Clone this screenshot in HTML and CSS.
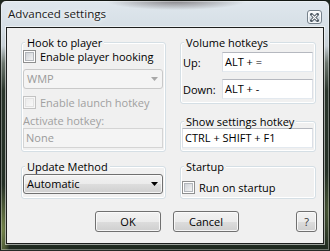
FILE: index.html
```html
<!DOCTYPE html>
<html>
<head>
<meta charset="utf-8">
<link rel="stylesheet" href="styles.css">
</head>
<body>
<div class="window">
  <div class="titlebar">
    <span class="title">Advanced settings</span>
    <span class="close"><svg width="9" height="9" viewBox="0 0 9 9"><path d="M1.5 1.5 L7.5 7.5 M7.5 1.5 L1.5 7.5" stroke="#4e5963" stroke-width="3" stroke-linecap="square"/><path d="M1.8 1.8 L7.2 7.2 M7.2 1.8 L1.8 7.2" stroke="#fff" stroke-width="1.1"/></svg></span>
  </div>
  <div class="client">
    <fieldset class="group hook">
      <legend>Hook to player</legend>
      <label class="check first"><span class="box"></span>Enable player hooking</label>
      <div class="combo disabled"><span>WMP</span><svg width="7" height="4" viewBox="0 0 7 4"><polygon points="0,0 7,0 3.5,4" fill="#a8a8a8"/></svg></div>
      <label class="check second disabled"><span class="box"></span>Enable launch hotkey</label>
      <div class="label disabled">Activate hotkey:</div>
      <div class="textbox disabled">None</div>
    </fieldset>
    <div class="rightcol">
      <fieldset class="group volume">
        <legend>Volume hotkeys</legend>
        <div class="field up"><span>Up:</span><div class="textbox">ALT + =</div></div>
        <div class="field down"><span>Down:</span><div class="textbox">ALT + -</div></div>
      </fieldset>
      <fieldset class="group show">
        <legend>Show settings hotkey</legend>
        <div class="textbox">CTRL + SHIFT + F1</div>
      </fieldset>
    </div>
    <fieldset class="group update">
      <legend>Update Method</legend>
      <div class="combo"><span>Automatic</span><svg width="7" height="4" viewBox="0 0 7 4"><polygon points="0,0 7,0 3.5,4" fill="#000"/></svg></div>
    </fieldset>
    <fieldset class="group startup">
      <legend>Startup</legend>
      <label class="check"><span class="box"></span>Run on startup</label>
    </fieldset>
    <div class="buttons">
      <button class="btn ok">OK</button>
      <button class="btn cancel">Cancel</button>
      <button class="btn help">?</button>
    </div>
  </div>
</div>
</body>
</html>
```

FILE: styles.css
```css
html, body {
  margin: 0;
  padding: 0;
  background: #1c261d;
}
body {
  font-family: "Open Sans", "Noto Sans", sans-serif;
  font-size: 11px;
  color: #000;
}
.window {
  width: 330px;
  height: 251px;
  box-sizing: border-box;
  border: 1px solid rgba(18, 22, 18, 0.9);
  border-radius: 6px 6px 0 0;
  padding: 0 5px 6px 5px;
  display: flex;
  flex-direction: column;
  background:
    radial-gradient(70px 9px at 175px 0px, rgba(60, 50, 52, 0.55), rgba(60, 50, 52, 0)),
    radial-gradient(7px 45px at 2px 228px, rgba(190, 210, 110, 0.55), rgba(190, 210, 110, 0)),
    radial-gradient(7px 40px at 327px 210px, rgba(150, 170, 90, 0.35), rgba(150, 170, 90, 0)),
    linear-gradient(to bottom, #dfe7ed 0px, #d6dfe6 26px, #c7d0d6 45px, #6d776f 62px, #2a352b 90px, #1f2a20 100%);
  box-shadow: inset 0 0 0 1px rgba(255, 255, 255, 0.35);
}
.titlebar {
  height: 26px;
  flex: none;
  display: flex;
  justify-content: space-between;
  align-items: flex-start;
}
.title {
  margin: 5px 0 0 2px;
  font-size: 11.6px;
  line-height: 16px;
  color: #1a1a1a;
  text-shadow: 0 0 6px rgba(255, 255, 255, 0.95), 0 0 3px rgba(255, 255, 255, 0.9);
}
.close {
  margin: 9px 2px 0 0;
  width: 15px;
  height: 14px;
  box-sizing: border-box;
  border: 1px solid #76828c;
  border-radius: 3px;
  background: linear-gradient(#fbfcfd, #e6ecf1 50%, #d5dde4 51%, #e4eaef);
  box-shadow: inset 0 0 0 1px rgba(255, 255, 255, 0.7);
  display: flex;
  align-items: center;
  justify-content: center;
}
.client {
  flex: 1;
  background: #f0f0f0;
  border: 1px solid #1d1f1e;
  box-shadow: 0 0 0 1px rgba(255, 255, 255, 0.55);
  display: grid;
  grid-template-columns: 145px 136px;
  column-gap: 14px;
  row-gap: 8px;
  align-content: start;
  padding: 8px 7px 0 14px;
}
.group {
  margin: 0;
  min-width: 0;
  padding: 0 2px 3px 1px;
  border: 1px solid #d5dfe5;
  border-radius: 3px;
  box-shadow: inset 0 0 0 1px #fff;
}
.group legend {
  margin-left: 2px;
  padding: 0 2px;
  line-height: 13px;
  background: #f0f0f0;
}
.rightcol {
  display: flex;
  flex-direction: column;
  gap: 11px;
}
.volume { padding-bottom: 4px; }
.update, .startup { padding-bottom: 4px; }
.check {
  display: flex;
  align-items: center;
  gap: 4px;
  height: 13px;
  line-height: 13px;
  white-space: nowrap;
}
.check.first { margin-top: 1px; }
.check.second { margin-top: 7px; }
.startup .check { margin-top: 8px; }
.box {
  flex: none;
  box-sizing: border-box;
  width: 13px;
  height: 13px;
  padding: 1px;
  border: 1px solid #8e8f8f;
  background: #fff;
}
.box::before {
  content: "";
  display: block;
  box-sizing: border-box;
  width: 9px;
  height: 9px;
  border: 1px solid #b2b6bb;
  background: linear-gradient(135deg, #cfd3d8, #f3f3f3);
}
.disabled { color: #a0a0a0; }
.check.disabled .box { border-color: #c2c2c2; background: #f7f7f7; }
.check.disabled .box::before { border-color: #e2e2e2; background: linear-gradient(135deg, #ececec, #f8f8f8); }
.combo {
  box-sizing: border-box;
  height: 20px;
  display: flex;
  align-items: center;
  justify-content: space-between;
  padding: 0 4px 0 3px;
  border: 1px solid #707070;
  border-radius: 3px;
  background: linear-gradient(#f2f2f2 0%, #ebebeb 50%, #dddddd 51%, #cfcfcf 100%);
  box-shadow: inset 0 0 0 1px rgba(252, 252, 252, 0.8);
  line-height: 18px;
}
.hook .combo { margin-top: 6px; }
.update .combo { margin-top: 1px; }
.combo.disabled {
  border-color: #c9c9c9;
  background: #f4f4f4;
  box-shadow: none;
  color: #9a9a9a;
}
.label {
  margin-top: 4px;
  line-height: 15px;
}
.textbox {
  box-sizing: border-box;
  height: 20px;
  border: 1px solid #dbdfe6;
  border-top-color: #b5b8bf;
  border-bottom-color: #e3e9ef;
  background: #fff;
  padding: 0 2px;
  line-height: 18px;
  white-space: nowrap;
}
.textbox.disabled {
  background: #f4f4f4;
  border-color: #d4d4d4;
  color: #9a9a9a;
}
.field {
  display: grid;
  grid-template-columns: 40px 1fr;
  align-items: center;
}
.field span { padding-left: 1px; }
.field.up { margin-top: 3px; }
.field.down { margin-top: 7px; }
.buttons {
  grid-column: 1 / -1;
  margin-top: 4px;
  display: flex;
  gap: 12px;
}
.btn {
  box-sizing: border-box;
  height: 21px;
  width: 66px;
  padding: 0;
  font: inherit;
  color: #000;
  line-height: 19px;
  border: 1px solid #707070;
  border-radius: 3px;
  background: linear-gradient(#f2f2f2 0%, #ebebeb 50%, #dddddd 51%, #cfcfcf 100%);
  box-shadow: inset 0 0 0 1px rgba(252, 252, 252, 0.85);
}
.btn.ok { margin-left: 74px; }
.btn.help {
  width: 21px;
  margin-left: auto;
  margin-right: -1px;
  color: #333;
}
```
